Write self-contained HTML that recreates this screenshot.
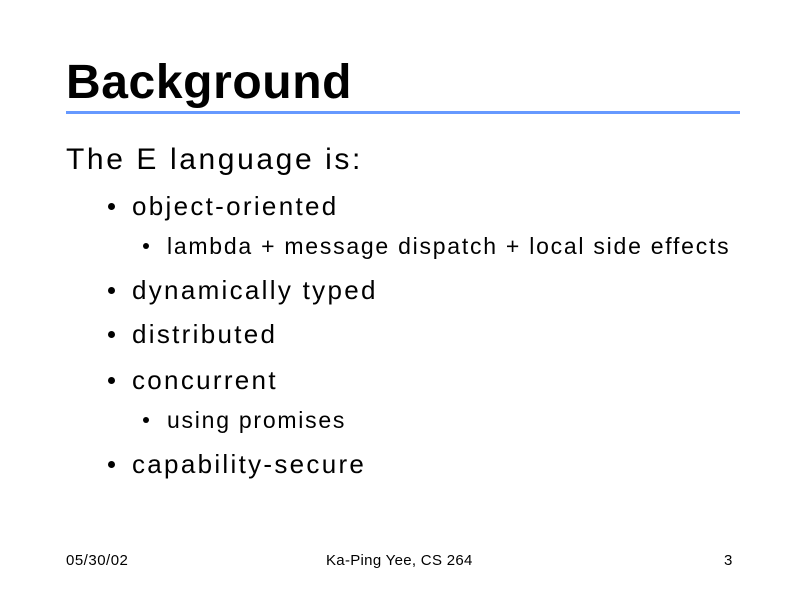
<!DOCTYPE html>
<html><head><meta charset="utf-8"><style>
html,body{margin:0;padding:0;background:#fff;}
body{width:800px;height:600px;position:relative;overflow:hidden;font-family:"Liberation Sans","DejaVu Sans",sans-serif;color:#000;}
.a{position:absolute;white-space:nowrap;line-height:1;}
.t{left:66px;top:59px;font-size:48px;font-weight:bold;letter-spacing:0.6px;}
.rule{position:absolute;left:66px;top:111px;width:674px;height:3px;background:#6699ff;}
.l1{left:66px;top:145px;font-size:30px;letter-spacing:2.6px;}
.l2{left:132px;font-size:26px;letter-spacing:2.3px;}
.l3{left:167px;font-size:23px;letter-spacing:1.75px;}
.b2,.b3{position:absolute;border-radius:50%;background:#000;}
.b2{left:108px;width:7px;height:7px;}
.b3{left:143px;width:6px;height:6px;}
.f{top:553px;font-size:15px;}
</style></head><body>
<div class="a t">Background</div>
<div class="rule"></div>
<div class="a l1">The E language is:</div>

<div class="b2" style="top:203px"></div>
<div class="a l2" style="top:193px">object-oriented</div>
<div class="b3" style="top:243px"></div>
<div class="a l3" style="top:235px">lambda + message dispatch + local side effects</div>
<div class="b2" style="top:287px"></div>
<div class="a l2" style="top:277px">dynamically typed</div>
<div class="b2" style="top:331px"></div>
<div class="a l2" style="top:321px">distributed</div>
<div class="b2" style="top:377px"></div>
<div class="a l2" style="top:367px">concurrent</div>
<div class="b3" style="top:417px"></div>
<div class="a l3" style="top:409px">using promises</div>
<div class="b2" style="top:461px"></div>
<div class="a l2" style="top:451px">capability-secure</div>

<div class="a f" style="left:66px;letter-spacing:0.5px">05/30/02</div>
<div class="a f" style="left:326px;letter-spacing:0.3px">Ka-Ping Yee, CS 264</div>
<div class="a f" style="left:724px;">3</div>
</body></html>
